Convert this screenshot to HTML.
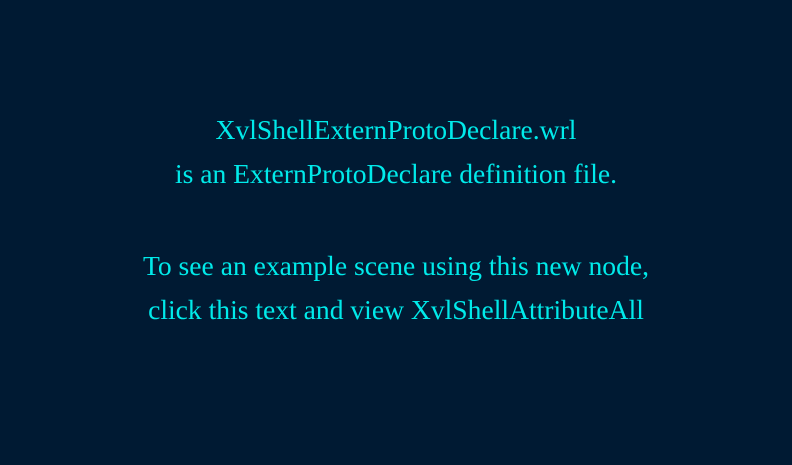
<!DOCTYPE html>
<html><head><style>
html,body{margin:0;padding:0;width:792px;height:465px;background:#001a33;overflow:hidden}
.t{position:absolute;left:0;width:792px;text-align:center;font-family:"Liberation Serif",serif;font-size:27.6px;color:#00eaea;line-height:30px;white-space:nowrap}
</style></head><body>
<div class="t" style="top:115px">XvlShellExternProtoDeclare.wrl</div>
<div class="t" style="top:159px">is an ExternProtoDeclare definition file.</div>
<div class="t" style="top:251px">To see an example scene using this new node,</div>
<div class="t" style="top:295px">click this text and view XvlShellAttributeAll</div>
</body></html>
